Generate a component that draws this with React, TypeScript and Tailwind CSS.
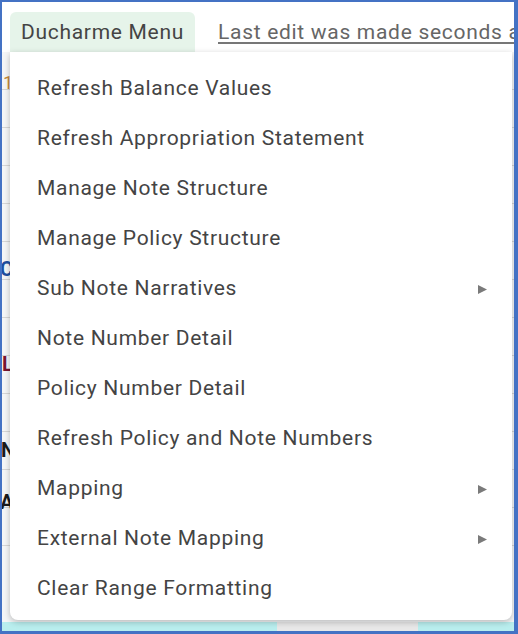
import React from "react";

const items: { label: string; sub?: boolean }[] = [
  { label: "Refresh Balance Values" },
  { label: "Refresh Appropriation Statement" },
  { label: "Manage Note Structure" },
  { label: "Manage Policy Structure" },
  { label: "Sub Note Narratives", sub: true },
  { label: "Note Number Detail" },
  { label: "Policy Number Detail" },
  { label: "Refresh Policy and Note Numbers" },
  { label: "Mapping", sub: true },
  { label: "External Note Mapping", sub: true },
  { label: "Clear Range Formatting" },
];

function Arrow() {
  return (
    <svg width="11" height="11" viewBox="0 0 11 11" className="shrink-0">
      <path d="M1 1 L10 5.5 L1 10 Z" fill="#7a7a7a" />
    </svg>
  );
}

export default function App() {
  const rowLines = [118, 156, 194, 232, 270, 308, 346, 384, 422, 460, 498, 536, 574];
  return (
    <div
      className="w-[518px] h-[634px] bg-[#4472c4] pt-[2px] pl-[2px] pr-[4px] pb-[3px]"
      style={{ fontFamily: "Roboto, 'Liberation Sans', sans-serif" }}
    >
      <div className="relative w-full h-full bg-white overflow-hidden">
        {/* top bar */}
        <div className="flex items-center h-[50px] pt-[10px]">
          <div className="ml-[8px] h-[40px] w-[185px] shrink-0 bg-[#e6f4ea] rounded-t-[6px] flex items-center pl-[11px] pt-[2px] text-[21px] tracking-[0.7px] text-[#444]">
            Ducharme Menu
          </div>
          <div className="ml-[23px] pt-[2px] text-[21px] tracking-[0.7px] text-[#666] underline decoration-[#777] underline-offset-[3px] whitespace-nowrap">
            Last edit was made seconds ago
          </div>
        </div>
        {/* spreadsheet background */}
        <div className="relative h-[580px] bg-[#f5f6f7]">
          {rowLines.map((y) => (
            <div key={y} className="h-[38px] border-b border-[#d6d6d6]" />
          ))}
          <div className="absolute left-[1px] top-[22px] text-[18px] text-[#c58a3a] leading-none">1</div>
          <div className="absolute left-[-2px] top-[207px] text-[20px] font-bold text-[#1f4fa0] leading-none">C</div>
          <div className="absolute left-0 top-[302px] text-[20px] font-bold text-[#7a1530] leading-none">L</div>
          <div className="absolute left-[-1px] top-[388px] text-[20px] font-bold text-[#1a1a1a] leading-none">N</div>
          <div className="absolute left-[-2px] top-[440px] text-[20px] font-bold text-[#1a1a1a] leading-none">A</div>
          <div className="absolute bottom-0 left-0 right-0 h-[10px] flex">
            <div className="w-[275px] bg-[#b9eeee]" />
            <div className="w-[141px] bg-[#e8e8e8]" />
            <div className="flex-1 bg-[#b9eeee]" />
          </div>
        </div>
        {/* dropdown */}
        <div className="absolute left-[8px] top-[50px] w-[502px] h-[568px] bg-white rounded-b-[8px] shadow-[0_2px_6px_rgba(0,0,0,0.25)] pt-[12px]">
          {items.map((it) => (
            <div key={it.label} className="h-[50px] flex items-center pl-[27px] pr-[24px] text-[21px] tracking-[0.7px] text-[#444]">
              <span className="flex-1">{it.label}</span>
              {it.sub && <Arrow />}
            </div>
          ))}
        </div>
      </div>
    </div>
  );
}
